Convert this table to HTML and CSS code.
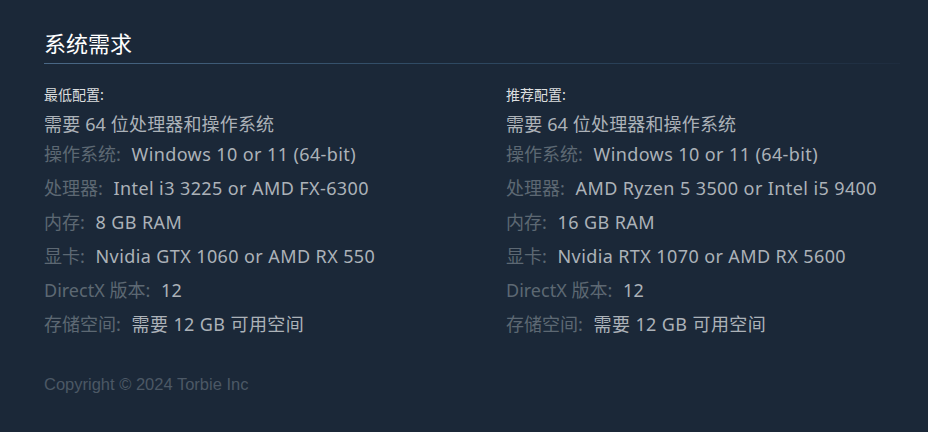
FILE: index.html
```html
<!DOCTYPE html>
<html lang="zh-CN">
<head>
<meta charset="utf-8">
<link rel="stylesheet" href="styles.css">
</head>
<body>
<div class="page">
  <h2 class="title">系统需求</h2>
  <div class="cols">
    <div class="col">
      <div class="sub">最低配置:</div>
      <div class="note">需要 64 位处理器和操作系统</div>
      <ul class="list">
        <li><span class="k">操作系统:</span> <span class="v">Windows 10 or 11 (64-bit)</span></li>
        <li><span class="k">处理器:</span> <span class="v">Intel i3 3225 or AMD FX-6300</span></li>
        <li><span class="k">内存:</span> <span class="v">8 GB RAM</span></li>
        <li><span class="k">显卡:</span> <span class="v">Nvidia GTX 1060 or AMD RX 550</span></li>
        <li><span class="k">DirectX 版本:</span> <span class="v">12</span></li>
        <li><span class="k">存储空间:</span> <span class="v">需要 12 GB 可用空间</span></li>
      </ul>
    </div>
    <div class="col">
      <div class="sub">推荐配置:</div>
      <div class="note">需要 64 位处理器和操作系统</div>
      <ul class="list">
        <li><span class="k">操作系统:</span> <span class="v">Windows 10 or 11 (64-bit)</span></li>
        <li><span class="k">处理器:</span> <span class="v">AMD Ryzen 5 3500 or Intel i5 9400</span></li>
        <li><span class="k">内存:</span> <span class="v">16 GB RAM</span></li>
        <li><span class="k">显卡:</span> <span class="v">Nvidia RTX 1070 or AMD RX 5600</span></li>
        <li><span class="k">DirectX 版本:</span> <span class="v">12</span></li>
        <li><span class="k">存储空间:</span> <span class="v">需要 12 GB 可用空间</span></li>
      </ul>
    </div>
  </div>
  <div class="copy">Copyright © 2024 Torbie Inc</div>
</div>
</body>
</html>
```
FILE: styles.css
```css
html, body {
  margin: 0;
  padding: 0;
  background: #1b2838;
}
body {
  font-family: "Noto Sans", "Noto Sans CJK SC", sans-serif;
  color: #acb2b8;
}
.page {
  padding: 27px 28px 0 44px;
}
.title {
  margin: 0;
  font-family: "Noto Sans CJK SC", sans-serif;
  font-size: 22px;
  font-weight: normal;
  color: #ffffff;
  line-height: 30px;
  padding-bottom: 6px;
  border-bottom: 1px solid transparent;
  border-image: linear-gradient(to right, #4a6886 0%, #2f4a63 45%, #263a50 80%, #1e2c3e 100%) 1;
}
.cols {
  display: grid;
  grid-template-columns: 462px 1fr;
  margin-top: 20px;
}
.sub {
  font-family: "Noto Sans CJK SC", sans-serif;
  font-size: 14px;
  line-height: 20px;
  color: #dcdedf;
}
.note {
  font-size: 18px;
  line-height: 22px;
  margin-top: 9px;
  letter-spacing: 0.15px;
  color: #acb2b8;
}
.list {
  list-style: none;
  margin: 0;
  padding: 0;
}
.list li {
  font-size: 18px;
  line-height: 22px;
  margin-top: 12px;
  color: #acb2b8;
}
.list li:first-child {
  margin-top: 8px;
}
.k {
  color: #5d6873;
  margin-right: 6px;
}
.v {
  letter-spacing: 0.4px;
}
.copy {
  margin-top: 40px;
  font-family: "Liberation Sans", Arial, sans-serif;
  font-size: 16.5px;
  color: #4c5865;
}
```
